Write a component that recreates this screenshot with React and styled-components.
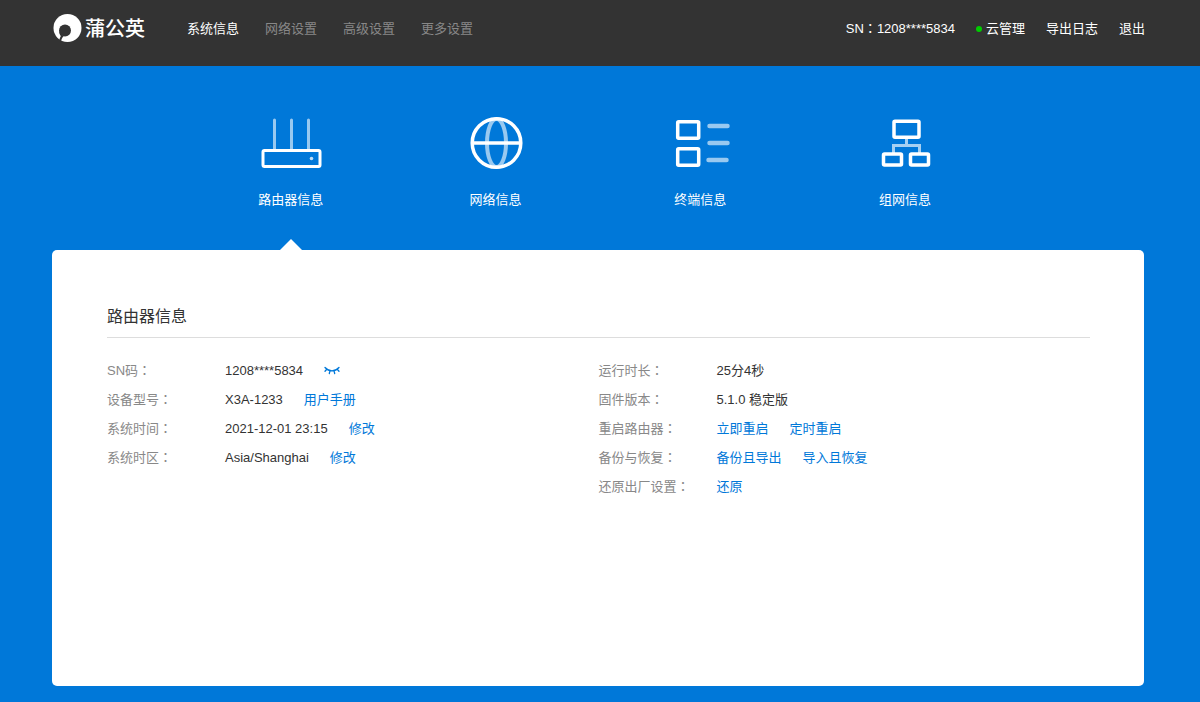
import React, { useState } from "react";
import styled, { createGlobalStyle } from "styled-components";

const GlobalStyle = createGlobalStyle`
  *, *::before, *::after {
    box-sizing: border-box;
  }
  body {
    margin: 0;
    background: #0078d9;
    color: #333;
    font-family: "Liberation Sans", Arial, "Noto Sans CJK SC", sans-serif;
    font-size: 13px;
    line-height: 20px;
  }
  a {
    color: inherit;
    text-decoration: none;
  }
`;

const Page = styled.div`
  display: flex;
  flex-direction: column;
  min-height: 100vh;
  padding-bottom: 16px;
`;
const Header = styled.header`
  display: flex;
  align-items: center;
  height: 66px;
  padding: 0 55px 8px 52px;
  background: #333;
  color: #fff;
`;
const Brand = styled.a`
  display: flex;
  align-items: center;
  gap: 3px;
  font-size: 20px;
  font-weight: 500;
`;
const Nav = styled.nav`
  display: flex;
  flex: 1;
  gap: 26px;
  margin-left: 42px;
`;
const NavLink = styled.a`
  color: ${(props) => (props.$active ? "#fff" : "#888")};
`;
const Tools = styled.div`
  display: flex;
  align-items: center;
  gap: 21px;
`;
const CloudLink = styled.a`
  display: flex;
  align-items: center;
  gap: 4px;

  &::before {
    content: "";
    width: 6px;
    height: 6px;
    border-radius: 50%;
    background: #0c0;
  }
`;
// The TC face centres the full-width colon in its box
const Colon = styled.span`
  font-family: "Noto Sans CJK TC", sans-serif;
  line-height: 1;
`;

const TabsWrap = styled.div`
  padding: 0 56px 0 52px;
`;
const Tabs = styled.div`
  display: flex;
  width: 75%;
  margin: 0 auto;
`;
const Tab = styled.button`
  display: flex;
  flex: 1;
  flex-direction: column;
  align-items: center;
  height: 184px;
  padding: 46px 0 0;
  border: 0;
  background: none;
  color: #fff;
  font: inherit;
  cursor: pointer;

  svg {
    margin-bottom: 14px;
  }

  &::after {
    content: "";
    margin-top: auto;
    border: 11px solid transparent;
    border-top: 0;
    border-bottom-color: ${(props) => (props.$active ? "#fff" : "transparent")};
  }
`;

const Panel = styled.main`
  flex: 1;
  margin: 0 56px 0 52px;
  padding: 53px 54px 40px 55px;
  border-radius: 5px;
  background: #fff;
`;
const Title = styled.h1`
  margin: 0 0 18px;
  padding-bottom: 6px;
  border-bottom: 1px solid #ddd;
  font-size: 16px;
  font-weight: 400;
  line-height: 28px;
`;
const Columns = styled.div`
  display: grid;
  grid-template-columns: 1fr 1fr;
`;
const Info = styled.dl`
  margin: 0;
`;
const InfoRow = styled.div`
  display: flex;
  height: 29px;
  line-height: 29px;
`;
const Term = styled.dt`
  width: 118px;
  color: #888;
`;
const Value = styled.dd`
  display: flex;
  align-items: center;
  gap: 21px;
  margin: 0;
`;
const ActionLink = styled.a`
  color: #0078d9;
`;
const IconButton = styled.button`
  display: flex;
  padding: 0;
  border: 0;
  background: none;
  color: #0078d9;
  cursor: pointer;
`;

const Logo = () => (
  <svg width="30" height="30" viewBox="0 0 30 30">
    <circle cx="15.5" cy="14" r="14" fill="#fff" />
    <circle cx="13" cy="16.5" r="6" fill="#333" />
    <path d="M7.200 18c.2 1.700.8 3 1.600 4-.9 1.500-1.300 3.300-1.800 5l2 1.200c.2-2.200.9-4.300 2.600-6z" fill="#333" />
  </svg>
);

const RouterIcon = () => (
  <svg width="64" height="64" viewBox="0 0 64 64" fill="none" stroke="#fff" strokeWidth="3">
    <path d="M15.5 8v29M32.500 8v29M49.500 8v29" opacity=".6" strokeLinecap="round" />
    <rect x="4" y="38.5" width="57" height="16" rx="1.5" />
    <circle cx="52.5" cy="46.5" r="1.8" fill="#fff" stroke="none" opacity=".75" />
  </svg>
);

const GlobeIcon = () => (
  <svg width="64" height="64" viewBox="0 0 64 64" fill="none" stroke="#fff">
    <ellipse cx="32.5" cy="31" rx="9.5" ry="24" strokeWidth="4" opacity=".6" />
    <path d="M8 31h49" strokeWidth="3.5" />
    <circle cx="32.5" cy="31" r="24.3" strokeWidth="3.5" />
  </svg>
);

const DevicesIcon = () => (
  <svg width="64" height="64" viewBox="0 0 64 64" fill="none" stroke="#fff" strokeWidth="3.5">
    <rect x="9.7" y="9.7" width="21" height="16.5" rx="1" />
    <rect x="9.7" y="36.7" width="21" height="16.5" rx="1" />
    <path d="M41.5 14h18M41.5 31h18M40.5 48h18" strokeWidth="4.5" strokeLinecap="round" opacity=".6" />
  </svg>
);

const NetworkIcon = () => (
  <svg width="64" height="64" viewBox="0 0 64 64" fill="none" stroke="#fff" strokeWidth="3.5">
    <path d="M33.5 26v8M20.5 41v-7.500h26V41" strokeWidth="3" opacity=".65" />
    <rect x="21" y="9.300" width="25" height="16" rx="1" />
    <rect x="10.5" y="42" width="18" height="11" rx="1" />
    <rect x="37.5" y="42" width="18" height="11" rx="1" />
  </svg>
);

const ClosedEyeIcon = () => (
  <svg width="16" height="12" viewBox="0 0 16 12" fill="none" stroke="currentColor" strokeWidth="1.3" strokeLinecap="round">
    <path d="M1 2.500c2 2.200 4.500 3.300 7 3.300s5-1.100 7-3.300M2.800 4.300L1 6.300M6 5.700L5.300 8.500M10 5.700l.7 2.800M13.200 4.300l1.800 2" />
  </svg>
);

const navItems = ["系统信息", "网络设置", "高级设置", "更多设置"];

const tabs = [
  { label: "路由器信息", Icon: RouterIcon },
  { label: "网络信息", Icon: GlobeIcon },
  { label: "终端信息", Icon: DevicesIcon },
  { label: "组网信息", Icon: NetworkIcon },
];

const deviceRows = [
  { term: "设备型号", value: "X3A-1233", links: ["用户手册"] },
  { term: "系统时间", value: "2021-12-01 23:15", links: ["修改"] },
  { term: "系统时区", value: "Asia/Shanghai", links: ["修改"] },
];

const systemRows = [
  { term: "运行时长", value: "25分4秒" },
  { term: "固件版本", value: "5.1.0 稳定版" },
  { term: "重启路由器", links: ["立即重启", "定时重启"] },
  { term: "备份与恢复", links: ["备份且导出", "导入且恢复"] },
  { term: "还原出厂设置", links: ["还原"] },
];

function Row({ term, value, links = [], children }) {
  return (
    <InfoRow>
      <Term>
        {term}
        <Colon>：</Colon>
      </Term>
      <Value>
        {value && <span>{value}</span>}
        {links.map((link) => (
          <ActionLink href="#" key={link}>{link}</ActionLink>
        ))}
        {children}
      </Value>
    </InfoRow>
  );
}

export default function App() {
  const [activeTab, setActiveTab] = useState(0);

  return (
    <Page>
      <GlobalStyle />
      <Header>
        <Brand href="#">
          <Logo />
          蒲公英
        </Brand>
        <Nav>
          {navItems.map((item, index) => (
            <NavLink href="#" key={item} $active={index === 0}>{item}</NavLink>
          ))}
        </Nav>
        <Tools>
          <span>SN<Colon>：</Colon>1208****5834</span>
          <CloudLink href="#">云管理</CloudLink>
          <a href="#">导出日志</a>
          <a href="#">退出</a>
        </Tools>
      </Header>

      <TabsWrap>
        <Tabs>
          {tabs.map(({ label, Icon }, index) => (
            <Tab key={label} type="button" $active={index === activeTab} onClick={() => setActiveTab(index)}>
              <Icon />
              {label}
            </Tab>
          ))}
        </Tabs>
      </TabsWrap>

      <Panel>
        <Title>路由器信息</Title>
        <Columns>
          <Info>
            <Row term="SN码" value="1208****5834">
              <IconButton type="button" aria-label="显示SN码">
                <ClosedEyeIcon />
              </IconButton>
            </Row>
            {deviceRows.map((row) => (
              <Row key={row.term} {...row} />
            ))}
          </Info>
          <Info>
            {systemRows.map((row) => (
              <Row key={row.term} {...row} />
            ))}
          </Info>
        </Columns>
      </Panel>
    </Page>
  );
}
